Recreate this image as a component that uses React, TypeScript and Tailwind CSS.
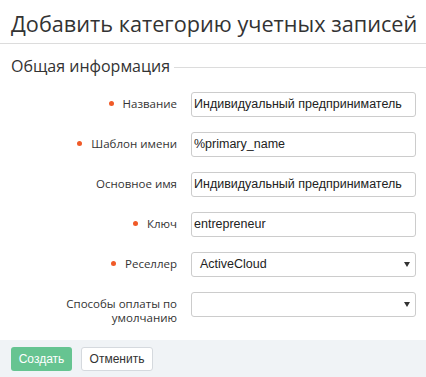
import React from 'react';

const Dot = () => <span className="inline-block w-[5px] h-[5px] rounded-full bg-[#f05a28] mr-[9px] mb-[2px] align-middle"></span>;

interface RowProps {
  label: React.ReactNode;
  required?: boolean;
  children: React.ReactNode;
}

const Row: React.FC<RowProps> = ({ label, required, children }) => (
  <div className="flex items-start">
    <div className="w-[166px] shrink-0 text-right text-[11.5px] leading-[14px] pt-[5px] text-[#333]">
      {required && <Dot />}
      {label}
    </div>
    <div className="ml-[14px] w-[225px]">{children}</div>
  </div>
);

const TextInput = ({ value }: { value: string }) => (
  <div className="h-[25px] border border-[#ccc] rounded-[3px] flex items-center pl-[2px] text-[12.5px] text-[#222]" style={{ fontFamily: '"Liberation Sans", Arial, sans-serif' }}>
    {value}
  </div>
);

const Select = ({ value }: { value: string }) => (
  <div className="h-[25px] border border-[#ccc] rounded-[3px] flex items-center justify-between pl-[8px] pr-[5px] text-[12.5px] text-[#222]" style={{ fontFamily: '"Liberation Sans", Arial, sans-serif' }}>
    <span>{value}</span>
    <svg width="6" height="5" viewBox="0 0 6 5"><path d="M0 0H6L3 5Z" fill="#333" /></svg>
  </div>
);

export default function App() {
  return (
    <div className="w-[426px] h-[377px] bg-white flex flex-col" style={{ fontFamily: '"Open Sans", sans-serif' }}>
      <h1 className="px-[11px] pt-[9px] h-[44px] text-[21.7px] leading-[30px] text-[#333] border-b border-[#dcdcdc] whitespace-nowrap">
        Добавить категорию учетных записей
      </h1>
      <div className="flex items-center mt-[11px] pl-[11px]">
        <span className="text-[16px] leading-[22px] text-[#333]">Общая информация</span>
        <div className="flex-1 h-px bg-[#dcdcdc] ml-[4px] mt-[2px]"></div>
      </div>
      <div className="flex flex-col gap-[15px] mt-[15px] pl-[11px]">
        <Row label="Название" required><TextInput value="Индивидуальный предприниматель" /></Row>
        <Row label="Шаблон имени" required><TextInput value="%primary_name" /></Row>
        <Row label="Основное имя"><TextInput value="Индивидуальный предприниматель" /></Row>
        <Row label="Ключ" required><TextInput value="entrepreneur" /></Row>
        <Row label="Реселлер" required><Select value="ActiveCloud" /></Row>
        <Row label={<>Способы оплаты по<br />умолчанию</>}><Select value="" /></Row>
      </div>
      <div className="mt-auto h-[37px] bg-[#f0f3f6] flex items-center gap-[9px] px-[11px]" style={{ fontFamily: '"Liberation Sans", Arial, sans-serif' }}>
        <button className="h-[24px] w-[61px] rounded-[3px] bg-[#66c491] text-white text-[12px]">Создать</button>
        <button className="h-[24px] w-[72px] rounded-[3px] bg-white border border-[#d5d9de] text-[#333] text-[12px]">Отменить</button>
      </div>
    </div>
  );
}
